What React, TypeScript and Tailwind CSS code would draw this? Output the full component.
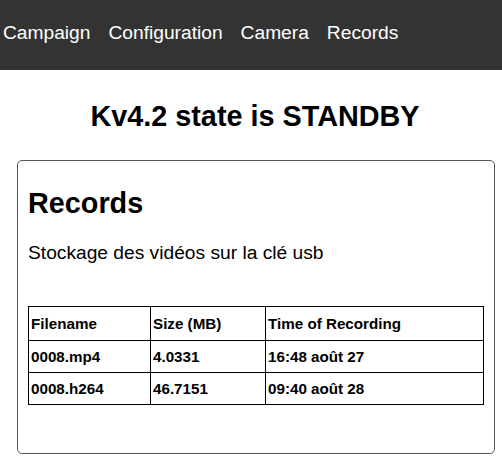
const records = [
  { name: "0008.mp4", size: "4.0331", time: "16:48 août 27" },
  { name: "0008.h264", size: "46.7151", time: "09:40 août 28" },
]

export default function App() {
  return (
    <div className="min-h-[460px] bg-white font-['Liberation_Sans',Arial,sans-serif] text-black">
      <nav className="h-[70px] bg-[#333333] pt-[22px] pl-[3px]">
        <ul className="flex gap-[18px] text-[19.2px] leading-[22px] text-white">
          <li>Campaign</li>
          <li>Configuration</li>
          <li>Camera</li>
          <li>Records</li>
        </ul>
      </nav>

      <h1 className="mt-[30px] pl-[8px] text-center text-[28.8px] font-bold leading-[33px]">
        Kv4.2 state is STANDBY
      </h1>

      <div className="mt-[27px] ml-[17px] mr-[7px] rounded-[5px] border border-[#555555] px-[10px] pt-[26px] pb-[48px]">
        <h2 className="text-[28.8px] font-bold leading-[33px]">Records</h2>
        <p className="mt-[22px] text-[19.2px] leading-[22px]">Stockage des vidéos sur la clé usb</p>

        <table className="mt-[42px] w-full table-fixed border-collapse border border-black text-left text-[15.2px] font-bold leading-[17px]">
          <colgroup>
            <col className="w-[122px]" />
            <col className="w-[115px]" />
            <col />
          </colgroup>
          <thead>
            <tr className="h-[34px]">
              <th className="border border-black px-[2px]">Filename</th>
              <th className="border border-black px-[2px]">Size (MB)</th>
              <th className="border border-black px-[2px]">Time of Recording</th>
            </tr>
          </thead>
          <tbody>
            {records.map((r) => (
              <tr key={r.name} className="h-[32px]">
                <td className="border border-black px-[2px]">{r.name}</td>
                <td className="border border-black px-[2px]">{r.size}</td>
                <td className="border border-black px-[2px]">{r.time}</td>
              </tr>
            ))}
          </tbody>
        </table>
      </div>
    </div>
  )
}
